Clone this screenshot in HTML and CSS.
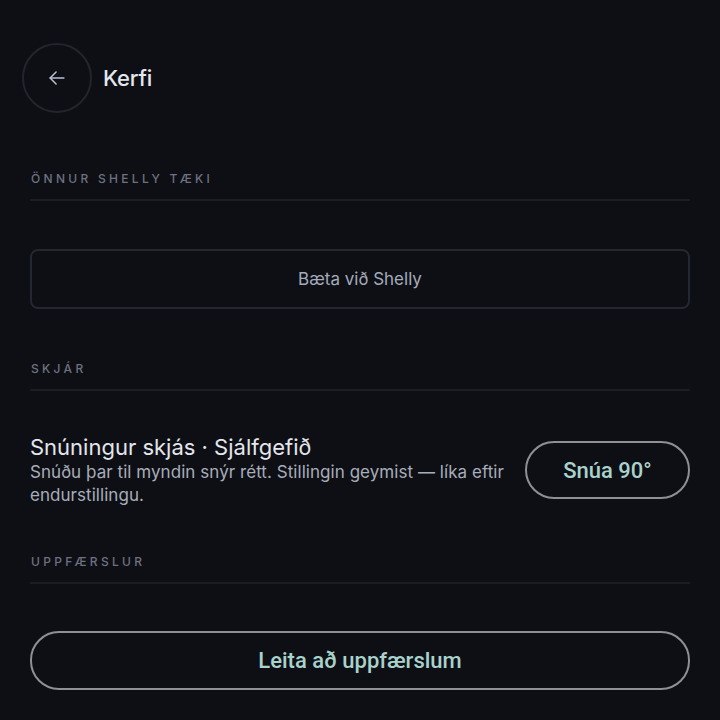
FILE: index.html
```html
<!DOCTYPE html>
<html lang="is">
<head>
<meta charset="utf-8">
<title>Kerfi</title>
<link rel="stylesheet" href="styles.css">
</head>
<body>
<div class="page">
  <header class="header">
    <button class="back" aria-label="Til baka">
      <svg width="22" height="22" viewBox="0 0 24 24" fill="none" stroke="currentColor" stroke-width="1.7" stroke-linecap="round" stroke-linejoin="round"><path d="M19.5 12H4.5"/><path d="M11 5.5L4.5 12l6.5 6.5"/></svg>
    </button>
    <h1 class="title">Kerfi</h1>
  </header>

  <section class="section first">
    <div class="section-head">Önnur Shelly tæki</div>
    <button class="box-btn">Bæta við Shelly</button>
  </section>

  <section class="section second">
    <div class="section-head">Skjár</div>
    <div class="row">
      <div class="row-text">
        <div class="row-title">Snúningur skjás · Sjálfgefið</div>
        <div class="row-desc">Snúðu þar til myndin snýr rétt. Stillingin geymist — líka eftir endurstillingu.</div>
      </div>
      <button class="pill">Snúa 90°</button>
    </div>
  </section>

  <section class="section third">
    <div class="section-head">Uppfærslur</div>
    <button class="pill wide">Leita að uppfærslum</button>
  </section>
</div>
</body>
</html>
```

FILE: styles.css
```css
* { box-sizing: border-box; }
html, body { margin: 0; padding: 0; background: #0e0f14; }
body { font-family: Inter, "Noto Sans", sans-serif; color: #e2e5ec; }
.page { padding: 43px 30px 0 30px; }
.header { display: flex; align-items: center; gap: 11px; margin-left: -8px; }
.back {
  width: 70px; height: 70px; border-radius: 50%;
  border: 2px solid #22252d; background: transparent; color: #b9bfcf;
  display: flex; align-items: center; justify-content: center; padding: 0;
}
.title { margin: 0; font-size: 22px; font-weight: 500; color: #e4e7ee; letter-spacing: -0.2px; }
.section.first { margin-top: 58px; }
.section.second { margin-top: 52px; }
.section.third { margin-top: 47px; }
.section-head {
  font-size: 12px; line-height: 16px; letter-spacing: 3.3px; text-transform: uppercase;
  color: #6d7282; font-weight: 500; padding: 0 0 12px 1px; border-bottom: 2px solid #1b1d24;
}
.box-btn {
  display: block; width: 100%; height: 60px; margin-top: 48px;
  background: transparent; border: 2px solid #24272f; border-radius: 8px;
  font-family: Inter, sans-serif; font-size: 17px; color: #a4abbd;
}
.row { display: flex; align-items: center; gap: 14px; margin-top: 42px; }
.row-text { flex: 1; min-width: 0; }
.row-title { font-size: 22px; line-height: 28px; color: #e3e6ed; }
.row-desc { font-size: 17px; line-height: 23px; color: #a7adba; letter-spacing: 0.05px; }
.pill {
  flex: none; width: 165px; height: 58px; border-radius: 29px;
  background: transparent; border: 2px solid #8f9096; color: #a8d2cc;
  font-family: Roboto, sans-serif; font-weight: 500; font-size: 22px;
}
.pill.wide { display: block; width: 100%; margin-top: 47px; height: 59px; }
```
